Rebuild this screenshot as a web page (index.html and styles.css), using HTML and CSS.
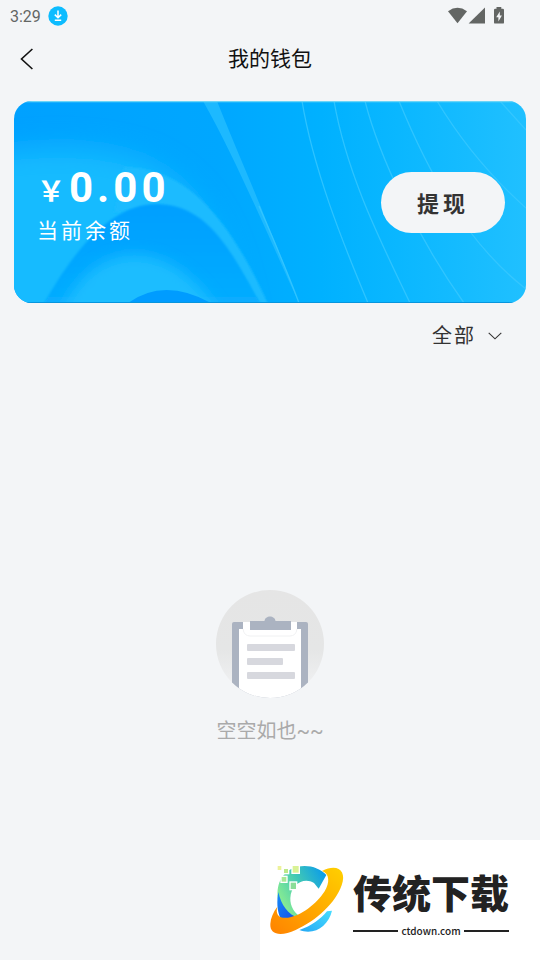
FILE: index.html
```html
<!DOCTYPE html>
<html lang="zh-CN">
<head>
  <meta charset="UTF-8" />
  <meta name="viewport" content="width=device-width, initial-scale=1.0"/>
  <title>我的钱包</title>
  <link rel="stylesheet" href="styles.css">
</head>
<body>
  <div class="status-bar">
    <span class="time">3:29</span>
    <svg class="download-icon" viewBox="0 0 20 20" aria-hidden="true">
      <circle cx="10" cy="10" r="9.7" fill="#0cbcff"/>
      <path d="M10 4.5v7M6.8 8.6l3.2 3.2 3.2-3.2M6.8 14.3h6.4" fill="none" stroke="#fff" stroke-width="1.5"/>
    </svg>
    <svg class="system-icons" viewBox="0 0 58 18" aria-hidden="true">
      <g fill="#636664">
        <path d="M0 4.2Q9.5-2.6 19 4.2L9.5 16.2Z"/>
        <path d="M37 .5V16.4H20.6Z"/>
        <path d="M48.5 0h4.8v1.8h1.5q1.2 0 1.2 1.2v12.4q0 1.2-1.2 1.2H47.2q-1.2 0-1.2-1.2V3q0-1.2 1.2-1.2h1.3Z"/>
      </g>
      <path d="M51.8 4.6v4h2.1l-3.5 5.8v-4.2h-2.2Z" fill="#f3f5f7"/>
    </svg>
  </div>

  <header class="nav-bar">
    <button class="back-btn" aria-label="返回">
      <svg viewBox="0 0 14 22" aria-hidden="true"><path d="M12.4 1 1.5 11l10.9 10" fill="none" stroke="#111" stroke-width="1.6"/></svg>
    </button>
    <h1>我的钱包</h1>
  </header>

  <main class="wallet">
    <section class="balance-card">
      <svg class="card-art" viewBox="0 0 512 202" preserveAspectRatio="none" aria-hidden="true">
        <defs>
          <linearGradient id="base" x1="0" y1="0" x2="1" y2="0">
            <stop offset="0" stop-color="#00a1ff"/>
            <stop offset=".4" stop-color="#00a7ff"/>
            <stop offset=".6" stop-color="#00b1ff"/>
            <stop offset=".75" stop-color="#0ab7ff"/>
            <stop offset="1" stop-color="#20c0ff"/>
          </linearGradient>
          <linearGradient id="hill" x1="0" y1="0" x2="0" y2="1">
            <stop offset="0" stop-color="#009fff"/>
            <stop offset=".5" stop-color="#00a6ff"/>
            <stop offset="1" stop-color="#08adff"/>
          </linearGradient>
          <filter id="haze" filterUnits="userSpaceOnUse" x="-100" y="-50" width="450" height="400"><feGaussianBlur stdDeviation="14"/></filter>
          <filter id="glow" filterUnits="userSpaceOnUse" x="0" y="80" width="300" height="200"><feGaussianBlur stdDeviation="7"/></filter>
          <filter id="edge" filterUnits="userSpaceOnUse" x="0" y="0" width="300" height="260"><feGaussianBlur stdDeviation="1"/></filter>
          <clipPath id="hillShape"><path d="M29 202C64 142 100 103 143 103C194 104 216 148 247 202Z"/></clipPath>
        </defs>
        <rect width="512" height="202" fill="url(#base)"/>
        <path d="M-90 68C0 42 100 38 150 72C196 104 224 152 240 300H-90Z" fill="#18bbff" filter="url(#haze)"/>
        <path d="M110 66C172 66 216 118 254 203H245C216 148 190 108 143 103L100 112Z" fill="#1cbbff" filter="url(#edge)"/>
        <path d="M29 204C64 142 100 103 143 103C194 104 216 148 247 204Z" fill="url(#hill)" filter="url(#edge)"/>
        <g clip-path="url(#hillShape)">
          <path d="M40 230C70 130 165 128 215 230Z" fill="#1fbdff" filter="url(#glow)"/>
        </g>
        <path d="M114 202Q150 176 197 202Z" fill="#009cff"/>
        <path d="M189 0H203C222 48 240 88 254 124C266 152 276 178 285 202C260 148 222 58 189 0Z" fill="#1db9ff"/>
        <g fill="none" stroke="#39c8ff" stroke-width="1.3" opacity=".8">
          <path d="M245 105C260 140 274 172 285 202"/>
          <path d="M288 0C299 67 328 140 354 202"/>
          <path d="M320 0C333 75 368 143 396 202"/>
          <path d="M351 0C365 55 403 136 450 202"/>
          <path d="M385 0C412 66 450 140 512 188"/>
          <path d="M423 0C449 43 477 76 512 107"/>
          <path d="M486 0 512 29"/>
        </g>
        <path d="M0 .5H512" stroke="#6cd5f7" stroke-width="1.5"/>
        <path d="M0 201.5H512" stroke="#0795dd"/>
      </svg>
      <div class="balance">
        <p class="amount"><span class="currency">&#xFFE5;</span>0.00</p>
        <p class="balance-label">当前余额</p>
      </div>
      <button class="withdraw-btn">提现</button>
    </section>

    <div class="filter">
      <select class="filter-select" aria-label="筛选">
        <option>全部</option>
      </select>
      <svg class="filter-arrow" viewBox="0 0 14 8" aria-hidden="true"><path d="m.7.8 6.3 6 6.3-6" fill="none" stroke="#333" stroke-width="1.1"/></svg>
    </div>

    <div class="empty">
      <svg class="empty-icon" viewBox="0 0 108 108" aria-hidden="true">
        <defs>
          <linearGradient id="disc" x1="0" y1="0" x2="0" y2="1">
            <stop offset="0" stop-color="#e5e5e5"/>
            <stop offset=".55" stop-color="#e5e6e6"/>
            <stop offset="1" stop-color="#f3f4f6"/>
          </linearGradient>
          <clipPath id="round"><circle cx="54" cy="54" r="54"/></clipPath>
        </defs>
        <g clip-path="url(#round)">
          <rect width="108" height="108" fill="url(#disc)"/>
          <rect x="16" y="32" width="76" height="80" rx="2" fill="#abb3c1"/>
          <path d="M27 32H81V39H85V108H23V39H27Z" fill="#fff"/>
          <path d="M27 39q1 7 7 7H74q6 0 7-7" fill="none" stroke="#f0f1f2"/>
          <path d="M34 31H48.500C49 25 59 25 59.500 31H75V40H34Z" fill="#abb3c1"/>
          <g fill="#d7d8de">
            <rect x="31" y="54" width="48" height="7" rx="1"/>
            <rect x="31" y="68" width="36" height="7" rx="1"/>
            <rect x="31" y="82" width="48" height="7" rx="1"/>
          </g>
        </g>
      </svg>
      <p>空空如也~~</p>
    </div>
  </main>

  <aside class="site-badge">
    <svg class="site-logo" viewBox="0 0 252 252" aria-hidden="true">
      <defs>
        <linearGradient id="ring" x1="0" y1="1" x2="1" y2="0">
          <stop offset="0" stop-color="#ff8200"/>
          <stop offset="1" stop-color="#ffd000"/>
        </linearGradient>
        <linearGradient id="arc" x1="0" y1=".7" x2="1" y2=".1">
          <stop offset="0" stop-color="#94f28c"/>
          <stop offset=".5" stop-color="#42c9b4"/>
          <stop offset="1" stop-color="#0799ed"/>
        </linearGradient>
        <linearGradient id="deep" x1="0" y1="0" x2="1" y2="1">
          <stop offset="0" stop-color="#168df6"/>
          <stop offset="1" stop-color="#1746e8"/>
        </linearGradient>
        <linearGradient id="tail" x1="0" y1="1" x2="1" y2="0">
          <stop offset="0" stop-color="#24a8f4"/>
          <stop offset="1" stop-color="#48ddff"/>
        </linearGradient>
      </defs>
      <path d="M187 60C164 34 118 24 82 42C43 62 31 111 48 155C59 184 80 205 107 196L116 189C91 176 78 154 79 129C81 87 120 66 150 84L164 101Z" fill="url(#arc)"/>
      <path d="M43 111C51 148 72 181 105 188C87 203 62 203 49 188C39 168 38 138 43 111Z" fill="url(#deep)"/>
      <path d="M174 48C221 24 249 48 233 91C215 143 158 197 95 225C51 245 17 240 19 207C20 189 28 171 40 155C34 178 44 191 72 188C109 184 158 147 182 109C198 83 197 56 174 48Z" fill="url(#ring)"/>
      <path d="M106 225C143 213 169 193 189 169L204 167C194 211 152 243 106 225Z" fill="url(#tail)"/>
      <g stroke="#fff" stroke-width="4">
        <rect x="84" y="31" width="22" height="24" fill="#d9f294"/>
        <rect x="58" y="40" width="16" height="16" fill="#bce989"/>
        <rect x="51" y="64" width="18" height="18" fill="#a8e895"/>
        <rect x="78" y="81" width="20" height="23" fill="#8bdd98"/>
      </g>
      <rect x="41" y="33" width="11" height="12" fill="#edf29a"/>
    </svg>
    <div class="site-name">
      <strong>传统下载</strong>
      <span class="site-url">ctdown.com</span>
    </div>
  </aside>
</body>
</html>
```
FILE: styles.css
```css
* {
  box-sizing: border-box;
  margin: 0;
  padding: 0;
}

body {
  font-family: Roboto, "Noto Sans CJK SC", sans-serif;
  background: #f3f5f7;
  color: #333;
  min-height: 100vh;
  display: flex;
  flex-direction: column;
}

button {
  border: none;
  font-family: inherit;
  cursor: pointer;
}

svg {
  display: block;
}

.status-bar {
  height: 32px;
  padding: 0 34px 0 10px;
  display: flex;
  align-items: center;
  color: #636664;
}

.time {
  font-size: 16px;
}

.download-icon {
  width: 20px;
  height: 20px;
  margin-left: 7px;
}

.system-icons {
  width: 58px;
  height: 18px;
  margin-left: auto;
}

/* title stays centred, side columns are equal */
.nav-bar {
  height: 54px;
  display: grid;
  grid-template-columns: 54px 1fr 54px;
  align-items: center;
}

.nav-bar h1 {
  font-size: 21px;
  font-weight: 400;
  line-height: 30px;
  color: #111;
  text-align: center;
}

.back-btn {
  height: 44px;
  padding-left: 20px;
  background: none;
}

.back-btn svg {
  width: 14px;
  height: 22px;
}

.wallet {
  flex: 1;
  padding: 15px 14px 0;
}

.balance-card {
  position: relative;
  min-height: 202px;
  padding: 0 21px 0 23px;
  border-radius: 18px;
  overflow: hidden;
  display: flex;
  justify-content: space-between;
  align-items: center;
  color: white;
}

.card-art {
  position: absolute;
  inset: 0;
  width: 100%;
  height: 100%;
}

.balance,
.withdraw-btn {
  position: relative;
}

.balance {
  padding-top: 8px;
}

.amount {
  font-size: 42px;
  font-weight: 700;
  line-height: 50px;
  letter-spacing: 4px;
}

.currency {
  font-family: "Noto Sans CJK SC", sans-serif;
  font-size: 28px;
  line-height: 1;
}

.balance-label {
  font-size: 21px;
  line-height: 36px;
  letter-spacing: 3px;
}

.withdraw-btn {
  width: 124px;
  height: 61px;
  border-radius: 31px;
  background: #f3f5f7;
  color: #333;
  font-size: 22px;
  font-weight: 700;
  letter-spacing: 4px;
}

.filter {
  display: flex;
  justify-content: flex-end;
  align-items: center;
  gap: 12px;
  padding: 18px 24px 0 0;
}

.filter-select {
  appearance: none;
  border: none;
  background: none;
  color: #333;
  font-family: inherit;
  font-size: 20px;
  line-height: 30px;
  letter-spacing: 2px;
}

.filter-arrow {
  width: 14px;
  height: 8px;
}

.empty {
  margin-top: 239px;
  display: flex;
  flex-direction: column;
  align-items: center;
  gap: 18px;
}

.empty-icon {
  width: 108px;
  height: 108px;
}

.empty p {
  font-size: 20px;
  line-height: 30px;
  color: #aaa;
}

.site-badge {
  align-self: flex-end;
  width: 280px;
  height: 120px;
  padding-left: 4px;
  background: white;
  display: flex;
  align-items: center;
  gap: 5px;
}

.site-logo {
  width: 84px;
  height: 84px;
  margin-bottom: 6px;
}

.site-name {
  font-family: "Noto Sans CJK SC", sans-serif;
  color: #222;
}

.site-name strong {
  display: block;
  font-size: 39px;
  font-weight: 900;
  line-height: 58px;
  margin-bottom: 3px;
}

.site-url {
  display: flex;
  align-items: center;
  gap: 3px;
  font-size: 10px;
  font-weight: 500;
  line-height: 16px;
}

.site-url::before,
.site-url::after {
  content: "";
  flex: 1;
  height: 2px;
  background: #222;
}
```
